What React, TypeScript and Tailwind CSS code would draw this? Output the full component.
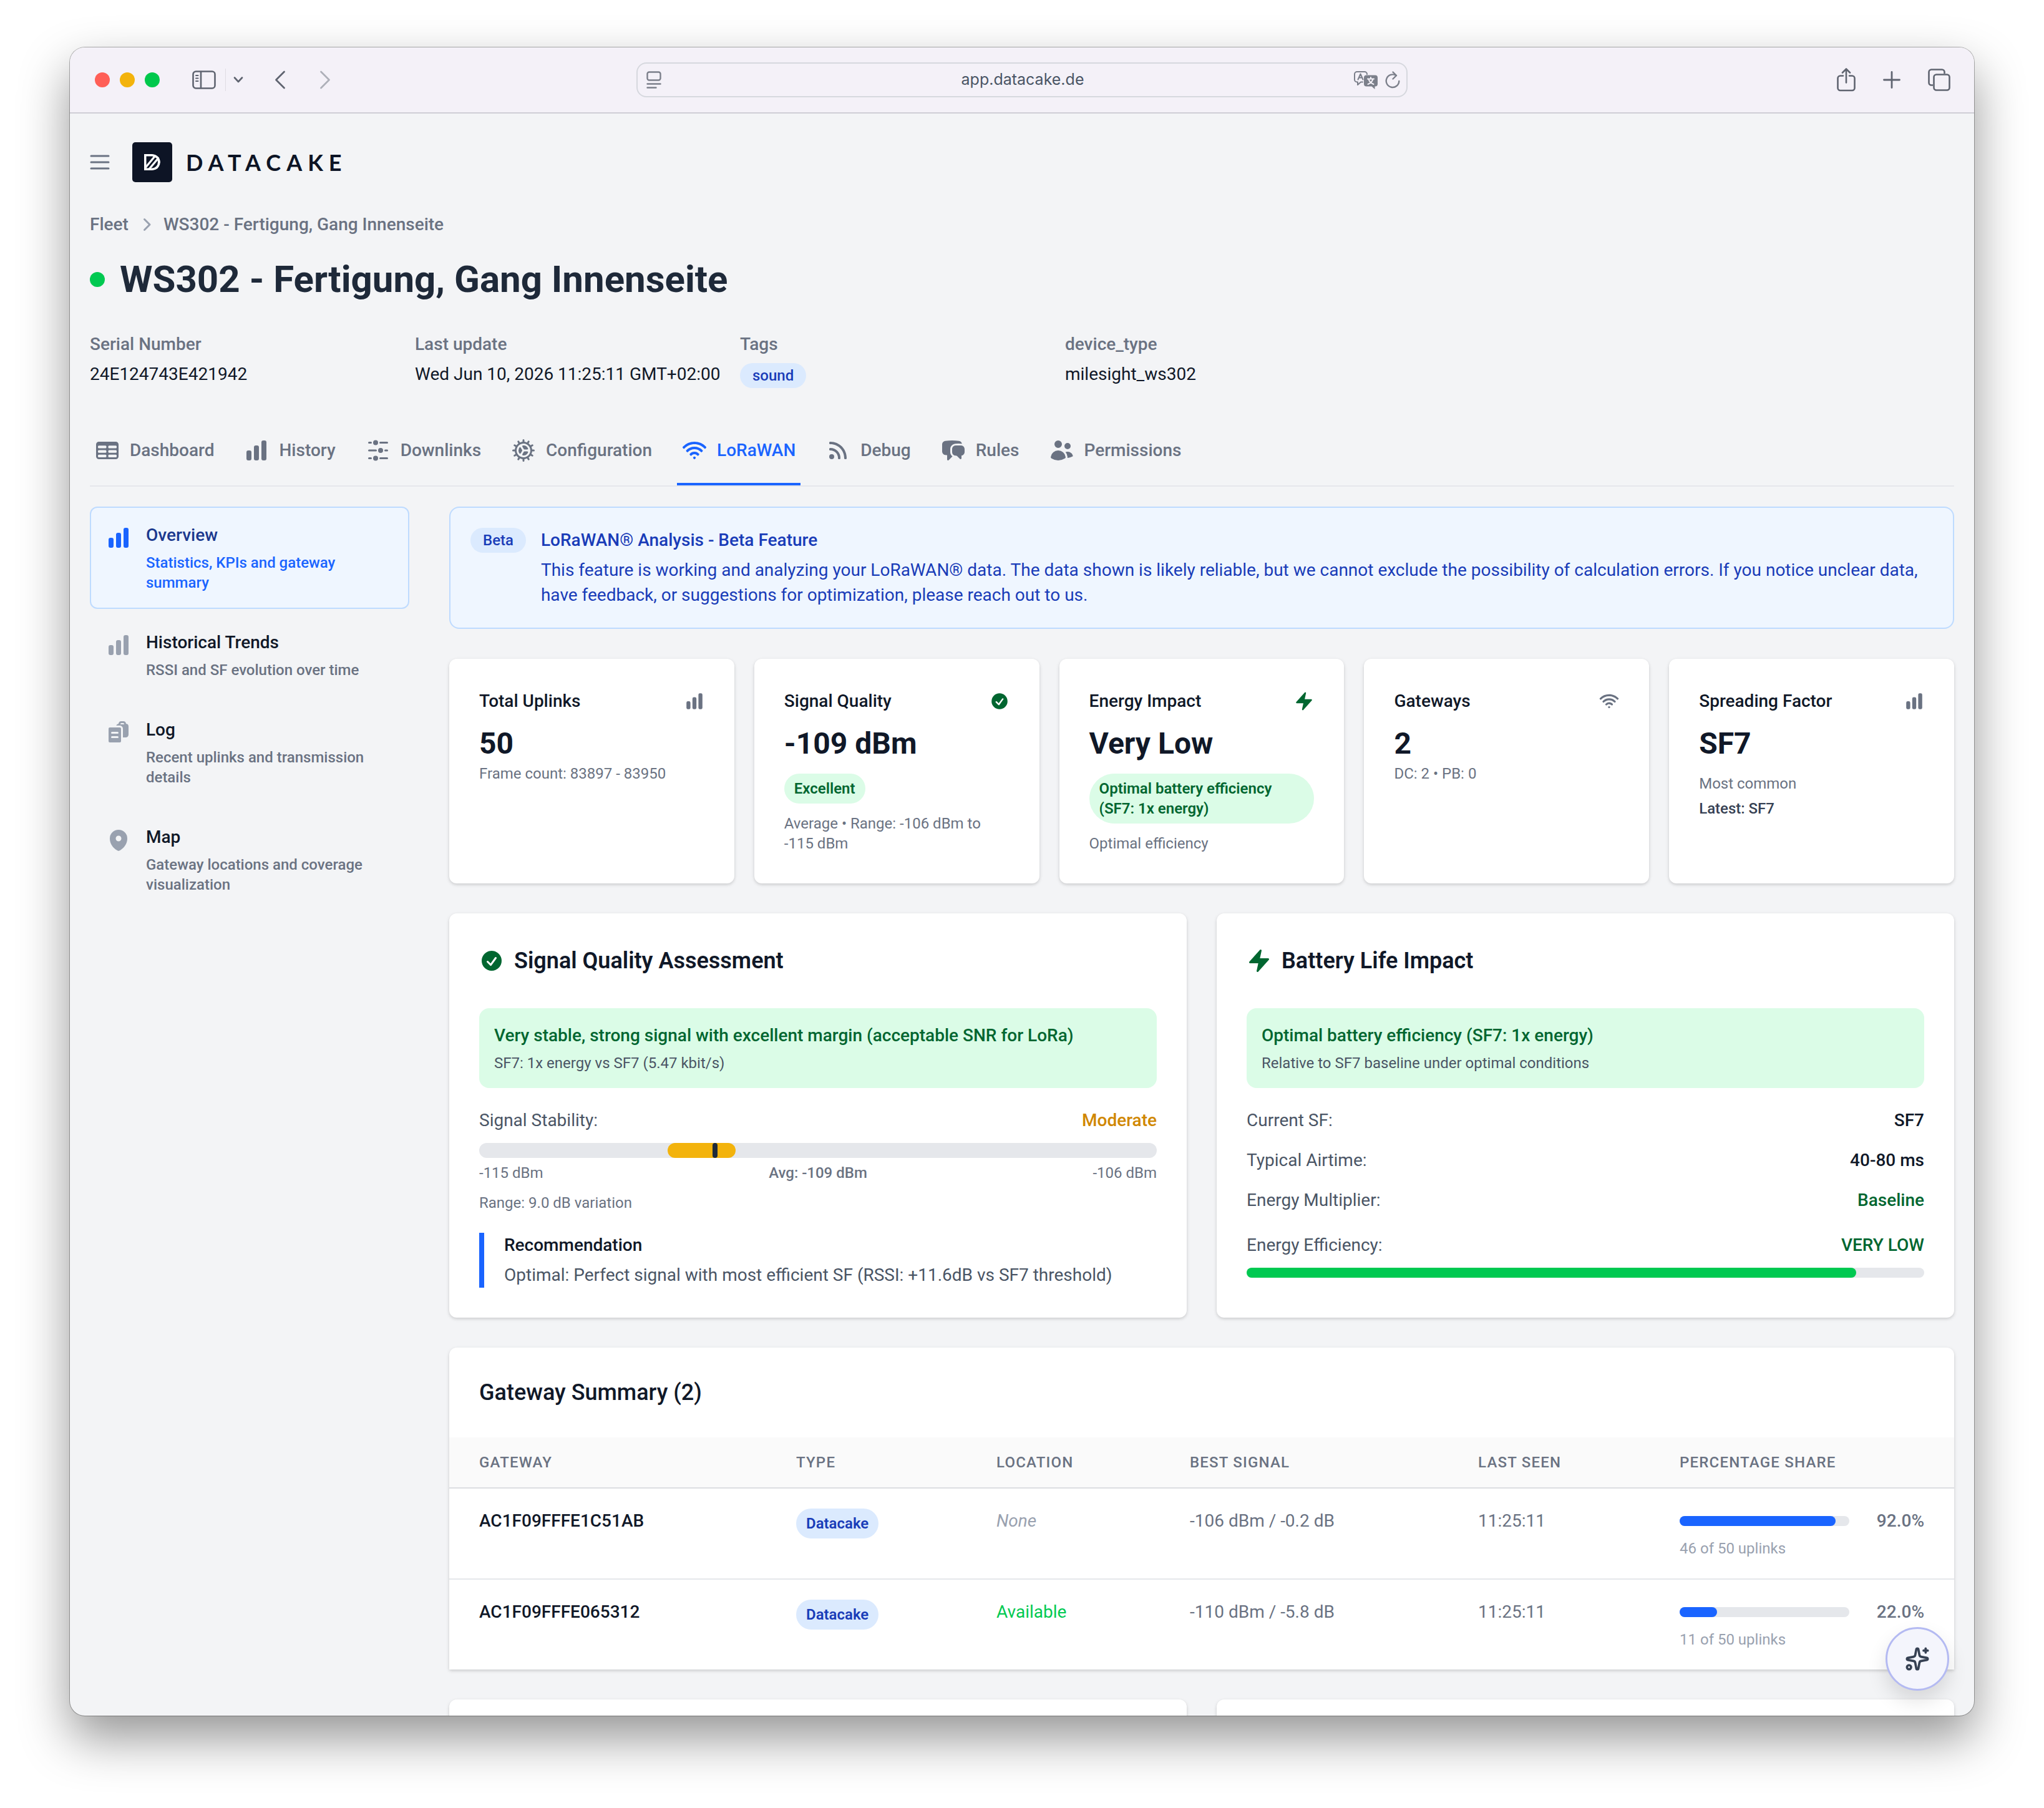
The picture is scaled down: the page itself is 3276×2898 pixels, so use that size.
import type { ComponentType, ReactNode } from "react";
import {
  HiMiniAdjustmentsHorizontal,
  HiMiniBolt,
  HiMiniChartBar,
  HiMiniChatBubbleLeftRight,
  HiMiniCheckCircle,
  HiMiniChevronRight,
  HiMiniClipboardDocumentList,
  HiMiniCog,
  HiMiniMapPin,
  HiMiniRss,
  HiMiniTableCells,
  HiMiniUsers,
  HiMiniWifi,
} from "react-icons/hi2";
import { Sparkles } from "lucide-react";

type Icon = ComponentType<{ className?: string }>;

/* ---------- Browser toolbar ---------- */

function SidebarIcon() {
  return (
    <svg viewBox="0 0 38 30" className="h-[30px] w-[38px]" fill="none" stroke="currentColor" strokeWidth="2.6" strokeLinecap="round">
      <rect x="1.5" y="1.5" width="35" height="27" rx="4.5" />
      <path d="M14 2v26" />
      <path d="M6 8h3.500M6 12.500h3.500M6 17h3.500" strokeWidth="2" />
    </svg>
  );
}

function ReaderIcon() {
  return (
    <svg viewBox="0 0 24 28" className="h-7 w-6" fill="none" stroke="currentColor" strokeWidth="2.400" strokeLinecap="round">
      <rect x="1.500" y="1.500" width="21" height="13" rx="3" />
      <path d="M1.500 20.500h21M1.500 26.500h14" />
    </svg>
  );
}

function TranslateIcon() {
  return (
    <svg viewBox="0 0 38 29" className="h-[29px] w-[38px]" fill="none" stroke="currentColor" strokeWidth="2" strokeLinecap="round" strokeLinejoin="round">
      <path d="M14 17.500h-3l-5 4.500v-4.500H5a4 4 0 0 1-4-4V5a4 4 0 0 1 4-4h12a4 4 0 0 1 4 4" />
      <path d="M6.500 13.500L10.500 4.500l4 9M8 10.500h5" />
      <path d="M20 6.500h14a4 4 0 0 1 4 4v10a4 4 0 0 1-4 4h-.500v4.500l-5-4.500H20a4 4 0 0 1-4-4v-10a4 4 0 0 1 4-4z" fill="currentColor" stroke="none" />
      <path d="M22 12.500h10M27 10v2.500M30.500 12.500c-1 4-4 7-8 8.500M23.500 12.500c1 4 4 7 8 8.500" stroke="#f4f1f8" />
    </svg>
  );
}

function ReloadIcon() {
  return (
    <svg viewBox="0 0 24 28" className="h-7 w-6" fill="none" stroke="currentColor" strokeWidth="2.400" strokeLinecap="round" strokeLinejoin="round">
      <path d="M17.500 7A10.300 10.300 0 1 0 22.300 16" />
      <path d="M12.500 1.500l5.500 5.500-5.500 5.500" />
    </svg>
  );
}

function ShareIcon() {
  return (
    <svg viewBox="0 0 30 38" className="h-[38px] w-[30px]" fill="none" stroke="currentColor" strokeWidth="2.600" strokeLinecap="round" strokeLinejoin="round">
      <path d="M10 12.500H5.500a4 4 0 0 0-4 4V32a4 4 0 0 0 4 4h19a4 4 0 0 0 4-4V16.500a4 4 0 0 0-4-4H20" />
      <path d="M15 23.500V2M9 7.500L15 1.500l6 6" />
    </svg>
  );
}

function TabsIcon() {
  return (
    <svg viewBox="0 0 36 36" className="size-9" fill="none" stroke="currentColor" strokeWidth="2.600" strokeLinejoin="round">
      <path d="M8 26.500H5.500a4 4 0 0 1-4-4v-17a4 4 0 0 1 4-4h17a4 4 0 0 1 4 4V8" />
      <rect x="9.500" y="9.500" width="25" height="25" rx="4" />
    </svg>
  );
}

function BrowserToolbar() {
  return (
    <div className="grid h-[104px] shrink-0 grid-cols-[1fr_1236px_1fr] items-center bg-[#f4f1f8] pr-[38px] pl-[38px] text-[#5f6470]">
      <div className="flex items-center pl-0.5">
        <div className="flex gap-4">
          <span className="size-6 rounded-full bg-[#ff5f57]" />
          <span className="size-6 rounded-full bg-[#f3b30c]" />
          <span className="size-6 rounded-full bg-[#00c84c]" />
        </div>
        <button aria-label="Sidebar" className="ml-[52px]">
          <SidebarIcon />
        </button>
        <span className="ml-[15px] h-9 w-px bg-[#dedce3]" />
        <button aria-label="Tab groups" className="ml-3">
          <svg viewBox="0 0 16 10" className="h-[10px] w-4" fill="none" stroke="currentColor" strokeWidth="2.600" strokeLinecap="round" strokeLinejoin="round">
            <path d="M2 1.500l6 6.500 6-6.500" />
          </svg>
        </button>
        <button aria-label="Back" className="ml-[50px]">
          <svg viewBox="0 0 18 30" className="h-[30px] w-[18px]" fill="none" stroke="currentColor" strokeWidth="2.800" strokeLinecap="round" strokeLinejoin="round">
            <path d="M15.500 2L2.500 15l13 13" />
          </svg>
        </button>
        <button aria-label="Forward" className="ml-[54px] text-[#aeb0b9]">
          <svg viewBox="0 0 18 30" className="h-[30px] w-[18px]" fill="none" stroke="currentColor" strokeWidth="2.800" strokeLinecap="round" strokeLinejoin="round">
            <path d="M2.500 2l13 13-13 13" />
          </svg>
        </button>
      </div>
      <div className="flex h-14 items-center rounded-2xl border-2 border-[#d6d8de] pr-[10px] pl-3.5 text-[#7b7f8a]">
        <ReaderIcon />
        <input
          aria-label="Address"
          readOnly
          value="app.datacake.de"
          className="ml-12 min-w-0 flex-1 bg-transparent text-center font-['Inter',sans-serif] text-[25px] text-[#4a5565] outline-none"
        />
        <button aria-label="Translate">
          <TranslateIcon />
        </button>
        <button aria-label="Reload" className="ml-3">
          <ReloadIcon />
        </button>
      </div>
      <div className="flex items-center justify-end">
        <button aria-label="Share">
          <ShareIcon />
        </button>
        <button aria-label="New tab" className="ml-11">
          <svg viewBox="0 0 28 28" className="size-7" fill="none" stroke="currentColor" strokeWidth="2.800" strokeLinecap="round">
            <path d="M14 1.500v25M1.500 14h25" />
          </svg>
        </button>
        <button aria-label="Show tabs" className="ml-11">
          <TabsIcon />
        </button>
      </div>
    </div>
  );
}

/* ---------- Page header ---------- */

function LogoMark() {
  return (
    <svg viewBox="0 0 64 64" className="size-16">
      <rect width="64" height="64" rx="5" fill="#0d1425" />
      <clipPath id="logo-d">
        <path d="M19 19h13a13 13 0 0 1 0 26H19z" />
      </clipPath>
      <g clipPath="url(#logo-d)">
        <path d="M19 19h13a13 13 0 0 1 0 26H19z" fill="#fff" />
        <path d="M22.500 22.500h9a9.500 9.500 0 0 1 0 19h-9z" fill="#0d1425" />
        <path d="M17.500 45L37 21.500M24.500 46L43 24" stroke="#fff" strokeWidth="3.200" />
      </g>
    </svg>
  );
}

function PageHeader() {
  return (
    <header>
      <div className="flex items-center">
        <button aria-label="Menu" className="text-gray-500">
          <svg viewBox="0 0 32 24" className="h-6 w-8" stroke="currentColor" strokeWidth="3" strokeLinecap="round">
            <path d="M2 2h28M2 12h28M2 22h28" />
          </svg>
        </button>
        <a href="#home" className="ml-9 flex items-center gap-[22px]">
          <LogoMark />
          <span className="font-['Lato',sans-serif] text-4xl leading-10 font-bold tracking-[9px] text-[#0d1425]">DATACAKE</span>
        </a>
      </div>
      <nav aria-label="Breadcrumb" className="mt-12 flex items-center gap-2 text-[28px] leading-10 font-medium text-gray-500">
        <a href="#fleet">Fleet</a>
        <HiMiniChevronRight className="size-10 text-gray-400" />
        <a href="#device">WS302 - Fertigung, Gang Innenseite</a>
      </nav>
      <div className="mt-8 flex items-center gap-6">
        <span className="size-6 rounded-full bg-green-500" />
        <h1 className="text-6xl leading-[72px] font-bold text-gray-800">WS302 - Fertigung, Gang Innenseite</h1>
      </div>
      <dl className="mt-12 grid max-w-[2052px] grid-cols-4 gap-8 text-[28px] leading-10">
        <Meta label="Serial Number">24E124743E421942</Meta>
        <Meta label="Last update">
          <span className="whitespace-nowrap">Wed Jun 10, 2026 11:25:11 GMT+02:00</span>
        </Meta>
        <div>
          <dt className="font-medium text-gray-500">Tags</dt>
          <dd className="mt-[10px] flex">
            <span className="rounded-full bg-blue-100 px-5 py-1 text-2xl font-medium text-blue-800">sound</span>
          </dd>
        </div>
        <Meta label="device_type">milesight_ws302</Meta>
      </dl>
    </header>
  );
}

function Meta({ label, children }: { label: string; children: ReactNode }) {
  return (
    <div>
      <dt className="font-medium text-gray-500">{label}</dt>
      <dd className="mt-2 text-gray-900">{children}</dd>
    </div>
  );
}

const tabs: { label: string; icon: Icon; active?: boolean }[] = [
  { label: "Dashboard", icon: HiMiniTableCells },
  { label: "History", icon: HiMiniChartBar },
  { label: "Downlinks", icon: HiMiniAdjustmentsHorizontal },
  { label: "Configuration", icon: HiMiniCog },
  { label: "LoRaWAN", icon: HiMiniWifi, active: true },
  { label: "Debug", icon: HiMiniRss },
  { label: "Rules", icon: HiMiniChatBubbleLeftRight },
  { label: "Permissions", icon: HiMiniUsers },
];

function Tabs() {
  return (
    <nav aria-label="Device" className="mt-12 flex gap-8 border-b-2 border-gray-200">
      {tabs.map(({ label, icon: TabIcon, active }) => (
        <a
          key={label}
          href={`#${label.toLowerCase()}`}
          className={`flex items-center gap-4 border-b-4 px-2 py-8 text-[28px] leading-10 font-medium ${
            active ? "border-[#1a64ff] text-[#1a64ff]" : "border-transparent text-gray-500"
          }`}
        >
          <TabIcon className="size-10" />
          {label}
        </a>
      ))}
    </nav>
  );
}

/* ---------- Side navigation ---------- */

const sections: { title: string; text: string; icon: Icon; active?: boolean }[] = [
  { title: "Overview", text: "Statistics, KPIs and gateway summary", icon: HiMiniChartBar, active: true },
  { title: "Historical Trends", text: "RSSI and SF evolution over time", icon: HiMiniChartBar },
  { title: "Log", text: "Recent uplinks and transmission details", icon: HiMiniClipboardDocumentList },
  { title: "Map", text: "Gateway locations and coverage visualization", icon: HiMiniMapPin },
];

function SideNav() {
  return (
    <nav aria-label="LoRaWAN" className="flex w-[512px] shrink-0 flex-col gap-2">
      {sections.map(({ title, text, icon: SectionIcon, active }) => (
        <a
          key={title}
          href={`#${title.toLowerCase().replace(" ", "-")}`}
          className={`flex gap-6 rounded-xl border-2 p-6 font-medium ${
            active ? "border-blue-200 bg-blue-50" : "border-transparent"
          }`}
        >
          <SectionIcon className={`mt-1 size-10 shrink-0 ${active ? "text-[#1a64ff]" : "text-gray-400"}`} />
          <span className="flex flex-col gap-2">
            <span className={`text-[28px] leading-10 ${active ? "text-blue-900" : "text-gray-900"}`}>{title}</span>
            <span className={`text-2xl leading-8 ${active ? "text-[#1a64ff]" : "text-gray-500"}`}>{text}</span>
          </span>
        </a>
      ))}
    </nav>
  );
}

/* ---------- Overview content ---------- */

function BetaNotice() {
  return (
    <section className="flex items-start gap-6 rounded-2xl border-2 border-blue-200 bg-blue-50 p-8">
      <span className="rounded-full bg-blue-100 px-5 py-1 text-2xl leading-8 font-medium text-blue-800">Beta</span>
      <div className="text-[28px] leading-10 text-blue-800">
        <h2 className="font-medium">LoRaWAN® Analysis - Beta Feature</h2>
        <p className="mt-2">
          This feature is working and analyzing your LoRaWAN® data. The data shown is likely reliable, but we cannot exclude the
          possibility of calculation errors. If you notice unclear data, have feedback, or suggestions for optimization, please
          reach out to us.
        </p>
      </div>
    </section>
  );
}

const card = "rounded-xl bg-white shadow-[0_2px_6px_rgba(0,0,0,0.1),0_2px_4px_rgba(0,0,0,0.08)]";

function StatCard({
  label,
  icon: StatIcon,
  value,
  good,
  children,
}: {
  label: string;
  icon: Icon;
  value: string;
  good?: boolean;
  children: ReactNode;
}) {
  return (
    <section className={`${card} p-12`}>
      <div className="flex items-center justify-between">
        <h3 className="text-[28px] leading-10 font-medium text-gray-900">{label}</h3>
        <StatIcon className={`size-8 ${good ? "text-green-800" : "text-gray-500"}`} />
      </div>
      <p className="mt-4 text-5xl leading-16 font-bold text-gray-900">{value}</p>
      <div className="text-2xl leading-8 text-gray-500">{children}</div>
    </section>
  );
}

function GoodBadge({ children }: { children: ReactNode }) {
  return (
    <div className="mt-4 flex">
      <span className="rounded-[40px] bg-green-100 px-4 py-2 font-semibold text-green-800">{children}</span>
    </div>
  );
}

function Stats() {
  return (
    <div className="grid grid-cols-5 gap-8">
      <StatCard label="Total Uplinks" icon={HiMiniChartBar} value="50">
        <p>Frame count: 83897 - 83950</p>
      </StatCard>
      <StatCard label="Signal Quality" icon={HiMiniCheckCircle} value="-109 dBm" good>
        <GoodBadge>Excellent</GoodBadge>
        <p className="mt-4">Average • Range: -106 dBm to -115 dBm</p>
      </StatCard>
      <StatCard label="Energy Impact" icon={HiMiniBolt} value="Very Low" good>
        <GoodBadge>Optimal battery efficiency (SF7: 1x energy)</GoodBadge>
        <p className="mt-4">Optimal efficiency</p>
      </StatCard>
      <StatCard label="Gateways" icon={HiMiniWifi} value="2">
        <p>DC: 2 • PB: 0</p>
      </StatCard>
      <StatCard label="Spreading Factor" icon={HiMiniChartBar} value="SF7">
        <p className="mt-4">Most common</p>
        <p className="mt-2 font-medium text-gray-700">Latest: SF7</p>
      </StatCard>
    </div>
  );
}

function PanelTitle({ icon: TitleIcon, children }: { icon: Icon; children: ReactNode }) {
  return (
    <h2 className="flex items-center gap-4 text-4xl leading-14 font-semibold text-gray-900">
      <TitleIcon className="size-10 text-green-800" />
      {children}
    </h2>
  );
}

function GoodBox({ title, text }: { title: string; text: string }) {
  return (
    <div className="mt-12 rounded-2xl bg-green-100 p-6">
      <p className="text-[28px] leading-10 font-medium text-green-800">{title}</p>
      <p className="mt-2 text-2xl leading-8 text-gray-600">{text}</p>
    </div>
  );
}

function Row({ label, value, tone }: { label: string; value: string; tone: string }) {
  return (
    <div className="flex justify-between">
      <span className="text-gray-600">{label}</span>
      <span className={`font-medium ${tone}`}>{value}</span>
    </div>
  );
}

function SignalPanel() {
  return (
    <section className={`${card} p-12`}>
      <PanelTitle icon={HiMiniCheckCircle}>Signal Quality Assessment</PanelTitle>
      <GoodBox title="Very stable, strong signal with excellent margin (acceptable SNR for LoRa)" text="SF7: 1x energy vs SF7 (5.47 kbit/s)" />
      <div className="mt-8 text-[28px] leading-10">
        <Row label="Signal Stability:" value="Moderate" tone="text-yellow-600" />
      </div>
      <div className="relative mt-4 h-6 rounded-full bg-gray-200">
        <div className="absolute inset-y-0 rounded-full bg-[#f3b30c]" style={{ left: "27.8%", width: "10%" }} />
        <div className="absolute inset-y-0 w-2 rounded-sm bg-gray-800" style={{ left: "34.4%" }} />
      </div>
      <div className="mt-2 flex justify-between text-2xl leading-8 text-gray-500">
        <span>-115 dBm</span>
        <span className="font-medium">Avg: -109 dBm</span>
        <span>-106 dBm</span>
      </div>
      <p className="mt-4 text-2xl leading-8 text-gray-500">Range: 9.0 dB variation</p>
      <div className="mt-8 border-l-8 border-[#1a64ff] pl-8 text-[28px] leading-10">
        <h3 className="font-medium text-gray-900">Recommendation</h3>
        <p className="mt-2 text-gray-600">Optimal: Perfect signal with most efficient SF (RSSI: +11.6dB vs SF7 threshold)</p>
      </div>
    </section>
  );
}

function BatteryPanel() {
  return (
    <section className={`${card} p-12`}>
      <PanelTitle icon={HiMiniBolt}>Battery Life Impact</PanelTitle>
      <GoodBox title="Optimal battery efficiency (SF7: 1x energy)" text="Relative to SF7 baseline under optimal conditions" />
      <div className="mt-8 flex flex-col gap-6 text-[28px] leading-10">
        <Row label="Current SF:" value="SF7" tone="text-gray-900" />
        <Row label="Typical Airtime:" value="40-80 ms" tone="text-gray-900" />
        <Row label="Energy Multiplier:" value="Baseline" tone="text-green-800" />
      </div>
      <div className="mt-8 text-[28px] leading-10">
        <Row label="Energy Efficiency:" value="VERY LOW" tone="text-green-800" />
      </div>
      <div className="mt-4 h-4 rounded-full bg-gray-200">
        <div className="h-4 rounded-full bg-green-500" style={{ width: "90%" }} />
      </div>
    </section>
  );
}

const gateways = [
  { id: "AC1F09FFFE1C51AB", location: null, signal: "-106 dBm / -0.2 dB", seen: "11:25:11", share: 92, count: 46 },
  { id: "AC1F09FFFE065312", location: "Available", signal: "-110 dBm / -5.8 dB", seen: "11:25:11", share: 22, count: 11 },
];

function GatewayTable() {
  return (
    <section className="rounded-t-xl bg-white shadow-[0_2px_6px_rgba(0,0,0,0.1),0_2px_4px_rgba(0,0,0,0.08)]">
      <h2 className="p-12 text-4xl leading-12 font-medium text-gray-900">Gateway Summary (2)</h2>
      <table className="w-full table-fixed border-separate border-spacing-0 text-left text-[28px] leading-10">
        <colgroup>
          <col className="w-[508px]" />
          <col className="w-[321px]" />
          <col className="w-[310px]" />
          <col className="w-[462px]" />
          <col className="w-[323px]" />
          <col />
        </colgroup>
        <thead className="bg-[#fafafa] text-2xl leading-8 tracking-wider text-gray-500 uppercase">
          <tr>
            {["Gateway", "Type", "Location", "Best signal", "Last seen", "Percentage share"].map((name) => (
              <th key={name} scope="col" className="border-b-2 border-[#dcdee2] px-12 py-6 font-medium whitespace-nowrap">
                {name}
              </th>
            ))}
          </tr>
        </thead>
        <tbody className="align-top text-gray-500 [&>tr:not(:last-child)>td]:border-b-2 [&>tr>td]:border-gray-200 [&>tr>td]:px-12 [&>tr>td]:py-8">
          {gateways.map((g) => (
            <tr key={g.id}>
              <td className="font-medium text-gray-900">{g.id}</td>
              <td>
                <div className="flex">
                  <span className="rounded-full bg-blue-100 px-4 py-2 text-2xl leading-8 font-semibold text-blue-800">Datacake</span>
                </div>
              </td>
              <td>{g.location ? <span className="text-green-500">{g.location}</span> : <span className="text-gray-400 italic">None</span>}</td>
              <td>{g.signal}</td>
              <td>{g.seen}</td>
              <td>
                <div className="flex items-center gap-6">
                  <div className="h-4 flex-1 rounded-full bg-gray-200">
                    <div className="h-4 rounded-full bg-[#1a64ff]" style={{ width: `${g.share}%` }} />
                  </div>
                  <span className="w-24 text-right font-medium">{g.share.toFixed(1)}%</span>
                </div>
                <p className="mt-2 text-2xl leading-8 text-gray-400">{g.count} of 50 uplinks</p>
              </td>
            </tr>
          ))}
        </tbody>
      </table>
    </section>
  );
}

export default function App() {
  return (
    <div className="h-screen bg-white px-28 pt-[76px] pb-[148px] font-['Roboto',sans-serif] antialiased">
      <div className="relative flex h-full flex-col overflow-hidden rounded-[24px] bg-gray-100 shadow-[0_0_0_1px_rgba(0,0,0,0.3),0_36px_80px_rgba(0,0,0,0.42)]">
        <BrowserToolbar />
        <div className="min-h-0 flex-1 overflow-hidden border-t-2 border-[#cfced6] px-8 pt-[46px]">
          <PageHeader />
          <Tabs />
          <div className="mt-8 flex gap-16">
            <SideNav />
            <main className="flex min-w-0 flex-1 flex-col gap-12">
              <BetaNotice />
              <Stats />
              <div className="grid grid-cols-2 gap-12">
                <SignalPanel />
                <BatteryPanel />
              </div>
              <GatewayTable />
              <div className="grid grid-cols-2 gap-12">
                <div className={`${card} h-40`} />
                <div className={`${card} h-40`} />
              </div>
            </main>
          </div>
        </div>
        <button
          aria-label="Assistant"
          className="absolute right-10 bottom-10 flex size-[102px] items-center justify-center rounded-full border-3 border-[#b4baf2] bg-[#f4f5fc] text-gray-700 shadow-[0_16px_32px_rgba(0,0,0,0.12)]"
        >
          <Sparkles className="size-10" strokeWidth={2.2} />
        </button>
      </div>
    </div>
  );
}
